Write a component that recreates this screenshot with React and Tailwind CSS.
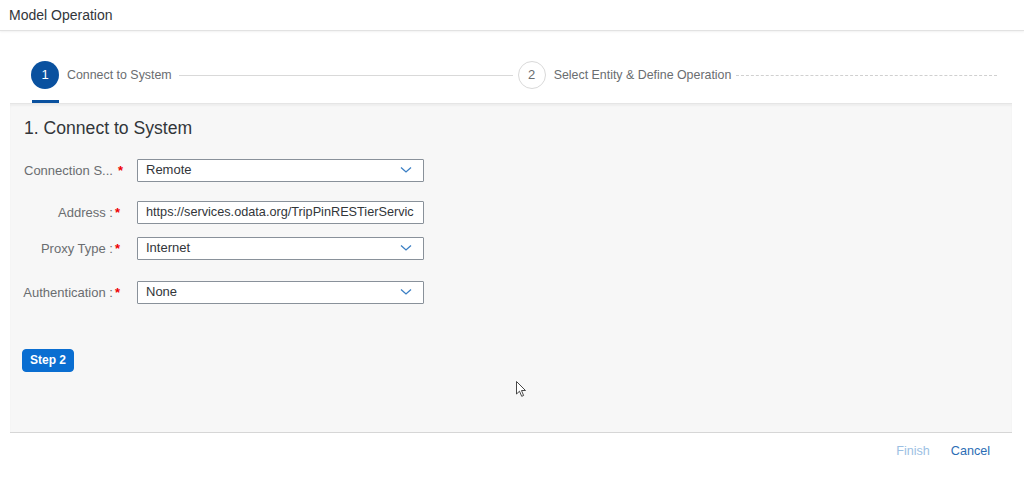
import React from "react";

const font = { fontFamily: '"Liberation Sans", Arial, sans-serif' };

function Chevron() {
  return (
    <svg width="12" height="8" viewBox="0 0 12 8" className="shrink-0">
      <path d="M1 1.5 L6 6 L11 1.5" fill="none" stroke="#3b7fc4" strokeWidth="1.3" />
    </svg>
  );
}

function Label({ children, truncate }) {
  return (
    <div className={`w-[96px] shrink-0 flex text-[13px] text-[#6a6d70] leading-none ${truncate ? "justify-start" : "justify-end"}`}>
      <span className="whitespace-nowrap">{children}</span>
      <span className={`text-[#e00] font-bold ${truncate ? "ml-[5px]" : "ml-[2px]"}`}>*</span>
    </div>
  );
}

function Select({ value }) {
  return (
    <div className="w-[287px] h-[23px] bg-white border border-[#89919a] rounded-[1px] flex items-center justify-between pl-[8px] pr-[11px] text-[13px] text-[#32363a]">
      <span>{value}</span>
      <Chevron />
    </div>
  );
}

export default function App() {
  return (
    <div className="w-[1024px] h-[478px] bg-white relative overflow-hidden" style={font}>
      <div className="h-[31px] flex items-center pl-[9px] text-[14px] text-[#32363a] border-b border-[#e2e2e2] shadow-[0_1px_2px_rgba(0,0,0,0.06)]">
        Model Operation
      </div>
      <div className="mx-[10px] w-[1002px]">
        <div className="h-[72px] relative flex items-center pl-[21px] pr-[15px] pt-[16px]">
          <div className="w-[28px] h-[28px] rounded-full bg-[#0a519f] text-white text-[13px] flex items-center justify-center shrink-0">1</div>
          <span className="ml-[8px] text-[12.4px] text-[#6a6d70] whitespace-nowrap">Connect to System</span>
          <div className="ml-[7px] w-[334px] h-px bg-[#d9d9d9]" />
          <div className="ml-[5px] w-[28px] h-[28px] rounded-full bg-white border border-[#d9d9d9] text-[#6a6d70] text-[13px] flex items-center justify-center shrink-0">2</div>
          <span className="ml-[8px] text-[12.4px] text-[#6a6d70] whitespace-nowrap">Select Entity &amp; Define Operation</span>
          <div className="ml-[5px] flex-1 border-t border-dashed border-[#d0d0d0]" />
          <div className="absolute left-[22px] bottom-0 w-[27px] h-[3px] bg-[#0a519f]" />
        </div>
        <div className="h-[330px] bg-[#f7f7f7] border-t border-[#e5e5e5] border-b border-b-[#d6d6d6] shadow-[inset_0_2px_2px_rgba(0,0,0,0.04)] pl-[14px] pt-[16px]">
          <div className="text-[17.6px] text-[#32363a] leading-none">1. Connect to System</div>
          <div className="mt-[21px] flex items-center">
            <Label truncate>Connection S...</Label>
            <div className="ml-[17px]"><Select value="Remote" /></div>
          </div>
          <div className="mt-[19px] flex items-center">
            <Label>Address :</Label>
            <div className="ml-[17px] w-[287px] h-[23px] bg-white border border-[#89919a] rounded-[1px] flex items-center pl-[8px] text-[12.7px] text-[#32363a] overflow-hidden whitespace-nowrap">
              https://services.odata.org/TripPinRESTierServic
            </div>
          </div>
          <div className="mt-[13px] flex items-center">
            <Label>Proxy Type :</Label>
            <div className="ml-[17px]"><Select value="Internet" /></div>
          </div>
          <div className="mt-[21px] flex items-center">
            <Label>Authentication :</Label>
            <div className="ml-[17px]"><Select value="None" /></div>
          </div>
          <button className="mt-[45px] -ml-[2px] h-[23px] px-[7px] rounded-[4px] bg-[#0a6ed1] text-white text-[12px] font-bold border border-[#0a6ed1]">
            Step 2
          </button>
        </div>
        <div className="h-[36px] flex items-center justify-end pr-[22px] gap-[21px] text-[12.6px]">
          <span className="text-[#9cbfe3]">Finish</span>
          <span className="text-[#2b6db5]">Cancel</span>
        </div>
      </div>
      <svg className="absolute left-[516px] top-[381px]" width="12" height="18" viewBox="0 0 12 18">
        <path d="M0.5 0.5 L0.5 13 L3.5 10.2 L5.7 15.3 L7.6 14.5 L5.5 9.5 L9.5 9.5 Z" fill="#fff" stroke="#333" strokeWidth="0.9" strokeLinejoin="round" />
      </svg>
    </div>
  );
}
